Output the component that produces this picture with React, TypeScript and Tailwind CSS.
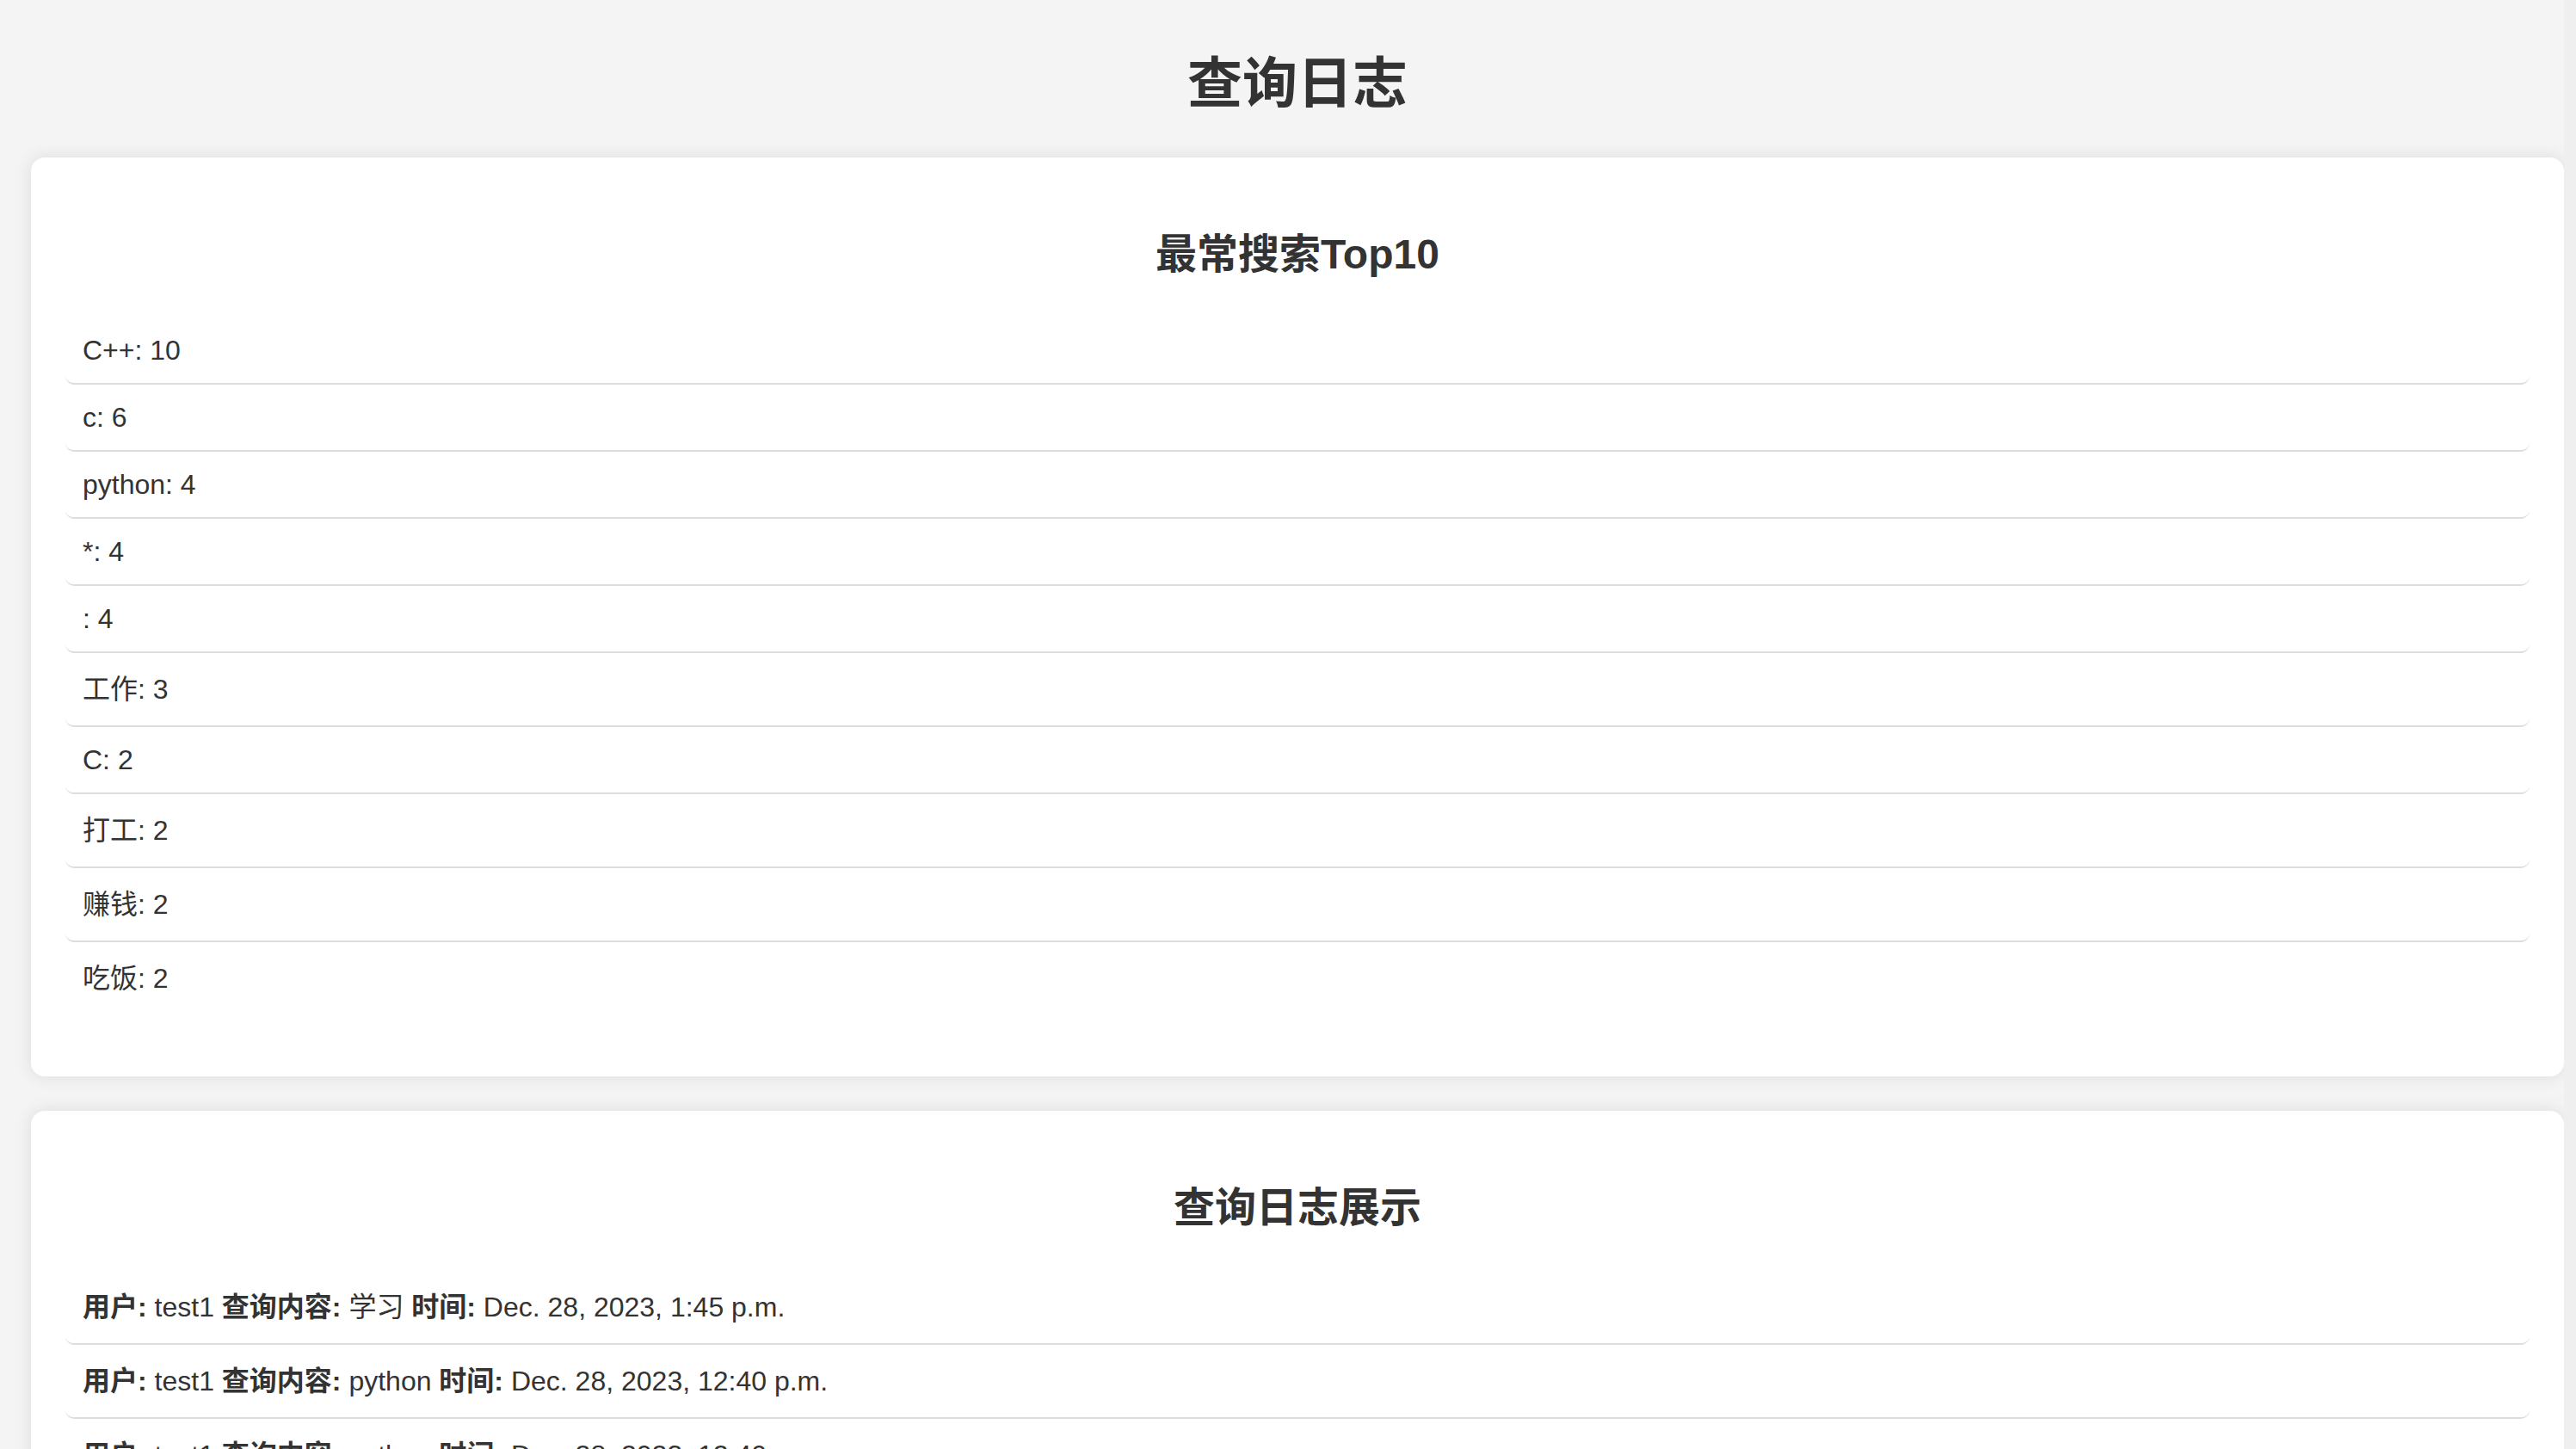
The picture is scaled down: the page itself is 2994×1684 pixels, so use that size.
const topSearches: { label: string; tall: boolean }[] = [
  { label: "C++: 10", tall: false },
  { label: "c: 6", tall: false },
  { label: "python: 4", tall: false },
  { label: "*: 4", tall: false },
  { label: ": 4", tall: false },
  { label: "工作: 3", tall: true },
  { label: "C: 2", tall: false },
  { label: "打工: 2", tall: true },
  { label: "赚钱: 2", tall: true },
  { label: "吃饭: 2", tall: true },
];

const logs = [
  { user: "test1", query: "学习", time: "Dec. 28, 2023, 1:45 p.m." },
  { user: "test1", query: "python", time: "Dec. 28, 2023, 12:40 p.m." },
  { user: "test1", query: "python", time: "Dec. 28, 2023, 12:40 p.m." },
  { user: "test1", query: "C++", time: "Dec. 28, 2023, 12:38 p.m." },
];

function Card(props: { title: string; children: React.ReactNode }) {
  return (
    <section className="bg-white rounded-[16px] shadow-[0_0_20px_rgba(0,0,0,0.1)] px-[40px] pt-[85px] pb-[72px]">
      <h2 className="text-center text-[48px] leading-[56px] font-bold mb-[45px]">
        {props.title}
      </h2>
      <ul>{props.children}</ul>
    </section>
  );
}

export default function App() {
  return (
    <div className="flex min-h-screen bg-[#f4f4f4] text-[#333] font-['Liberation_Sans','Noto_Sans_CJK_SC',sans-serif]">
      <main className="flex-1 pl-[36px] pt-[60px] pb-[40px]">
        <h1 className="text-center text-[64px] leading-[74px] font-bold mb-[49px]">
          查询日志
        </h1>

        <Card title="最常搜索Top10">
          {topSearches.map((item, i) => {
            const last = i === topSearches.length - 1;
            return (
              <li
                key={i}
                className={
                  "flex items-center px-[20px] text-[32px] rounded-[10px] " +
                  (last
                    ? "h-[84px]"
                    : item.tall
                      ? "h-[86px] border-b-2 border-[#dddddd]"
                      : "h-[78px] border-b-2 border-[#dddddd]")
                }
              >
                {item.label}
              </li>
            );
          })}
        </Card>

        <div className="mt-[40px]">
          <Card title="查询日志展示">
            {logs.map((log, i) => (
              <li
                key={i}
                className="flex items-center h-[86px] px-[20px] text-[32px] rounded-[10px] border-b-2 border-[#dddddd] whitespace-pre"
              >
                <span>
                  <strong>用户:</strong> {log.user} <strong>查询内容:</strong>{" "}
                  {log.query} <strong>时间:</strong> {log.time}
                </span>
              </li>
            ))}
          </Card>
        </div>
      </main>
      <div className="w-[14px] bg-[#efefef]" />
    </div>
  );
}
